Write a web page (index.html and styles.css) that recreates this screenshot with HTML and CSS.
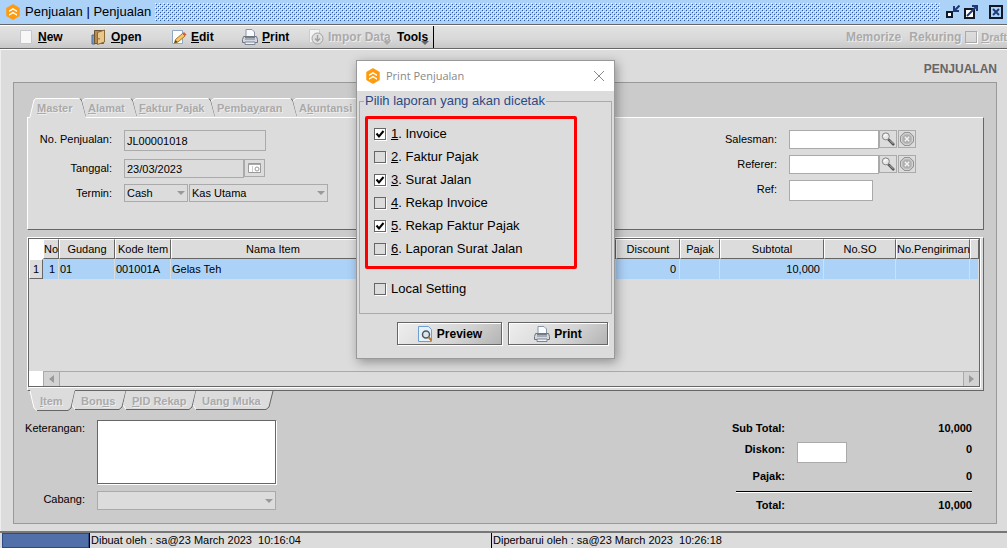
FILE: index.html
```html
<!doctype html>
<html lang="id">
<head>
	<meta charset="UTF-8">
	<title>Penjualan | Penjualan</title>
	<link rel="stylesheet" href="styles.css">
</head>
<body>
	<!-- shared icons -->
	<svg class="defs" aria-hidden="true">
		<symbol id="logo" viewBox="0 0 16 16">
			<path d="M8 1l6 3.500v7L8 15l-6-3.500v-7z" fill="#ff9b0f" stroke="#ff9b0f" stroke-width="1.500" stroke-linejoin="round"/>
			<path d="M4 8V6.500l4-2.500 4 2.500V8L8 5.800zM4 11.800v-1.500l4-2.500 4 2.500v1.500L8 9.600z" fill="#fff"/>
		</symbol>
		<symbol id="printer" viewBox="0 0 16 16">
			<path d="M4 7V.5h6L12.500 3v4" fill="#f8fbff" stroke="#8a96a6"/>
			<path d="M1.500 7.500h13l1 3v3H.5v-3z" fill="#d5d9df" stroke="#6e7681"/>
			<path d="M3 10h10M3 8.500h10" stroke="#777f8a"/>
			<path d="M3 13h10v2.500H3z" fill="#eef3fa" stroke="#7c8795"/>
		</symbol>
		<symbol id="lens" viewBox="0 0 16 16">
			<path d="M9 9l5 5" stroke="#555" stroke-width="3" stroke-linecap="round"/>
			<path d="M10 9.500l4 4" stroke="#c8c8c8"/>
			<circle cx="5.500" cy="5" r="4" fill="#e8e8e8" stroke="#777"/>
			<path d="M3.500 5a3 3 0 0 1 3-2" fill="none" stroke="#fff" stroke-width="1.500"/>
		</symbol>
		<symbol id="clear" viewBox="0 0 16 16">
			<path d="M5 .5h6L15.500 5v6L11 15.500H5L.5 11V5z" fill="#b0b0b0" stroke="#888"/>
			<path d="M5.400 2h5.200L14 5.400v5.200L10.600 14H5.400L2 10.600V5.400z" fill="none" stroke="#e4e4e4"/>
			<path d="M5.500 5.500l5 5m0-5l-5 5" stroke="#f4f4f4" stroke-width="1.500"/>
		</symbol>
	</svg>

	<header class="titlebar">
		<svg class="icon"><use href="#logo"/></svg>
		<h1>Penjualan | Penjualan</h1>
		<div class="grip"></div>
		<button class="winbtn" aria-label="Minimize">
			<svg viewBox="0 0 14 14"><path d="M1 7h5v5H1z" fill="#fff" stroke="#101828" stroke-width="2"/><path d="M8 1v5h5" fill="none" stroke="#203a78" stroke-width="2"/><path d="M8 6l5.500-5.500" stroke="#203a78" stroke-width="2"/></svg>
		</button>
		<button class="winbtn" aria-label="Maximize">
			<svg viewBox="0 0 14 14"><path d="M1 4h9v9H1z" fill="#fff" stroke="#101828" stroke-width="2"/><path d="M3 11L12 2" stroke="#203a78" stroke-width="2"/><path d="M8 1h5v5" fill="none" stroke="#203a78" stroke-width="2"/></svg>
		</button>
		<button class="winbtn close" aria-label="Close">
			<svg viewBox="0 0 14 14"><path d="M1 1h12v12H1z" fill="#add2f8" stroke="#101828" stroke-width="2"/><path d="M4 4l6 6m0-6l-6 6" stroke="#203a78" stroke-width="2"/></svg>
		</button>
	</header>

	<nav class="toolbar">
		<button class="tool new">
			<svg class="icon" viewBox="0 0 16 16"><path d="M2.500 1.500h11v13h-11z" fill="#f7f7f7" stroke="#c4c8cc"/></svg>
			<span><u>N</u>ew</span>
		</button>
		<button class="tool open">
			<svg class="icon" viewBox="0 0 16 16"><path d="M1 6h3v9H1z" fill="#7d9cc0" stroke="#4c6c94"/><path d="M3.500 1.500h9v13h-9z" fill="#b98a50" stroke="#6e5432"/><path d="M6.500 3.500L13.500 1v12l-7 2.500z" fill="#e9c68a" stroke="#8b6a38"/><path d="M8 9v1.500" stroke="#6c4a1c"/></svg>
			<span><u>O</u>pen</span>
		</button>
		<button class="tool edit">
			<svg class="icon" viewBox="0 0 16 16"><path d="M1.500 1.500h10v13h-10z" fill="#fdfdfd" stroke="#8fa8c8"/><path d="M4.500 10.500l7-6 2.500 2.500-7 6-3.500 1z" fill="#f5c768" stroke="#a87422"/><path d="M11.500 4.500l1.500-1.500 2.500 2.500-1.500 1.500z" fill="#dc5a4a"/><path d="M3.500 14l1-3 2 2z" fill="#444"/></svg>
			<span><u>E</u>dit</span>
		</button>
		<button class="tool print">
			<svg class="icon"><use href="#printer"/></svg>
			<span><u>P</u>rint</span>
		</button>
		<button class="tool impor drop" disabled>
			<svg class="icon" viewBox="0 0 16 16"><path d="M1.500.5h10v13h-10z" fill="#f4f4f4" stroke="#ccc"/><circle cx="9.500" cy="9.500" r="5.500" fill="#e0e0e0" stroke="#a0a0a0"/><path d="M9.500 6v6M7 9.500l2.500 2.500 2.500-2.500" fill="none" stroke="#a0a0a0" stroke-width="1.500"/></svg>
			<span>Impor Data</span>
		</button>
		<button class="tool tools drop"><span>Tools</span></button>
		<div class="right">
			<button class="tool" disabled>Memorize</button>
			<button class="tool" disabled>Rekuring</button>
			<input class="check" type="checkbox" id="draft" disabled>
			<label for="draft"><u>D</u>raft</label>
		</div>
	</nav>

	<main>
		<h2>PENJUALAN</h2>
		<div class="panel">
			<div class="tabs top">
				<button disabled class="t-master"><svg viewBox="0 0 56 19"><path class="face" d="M0 20L4 2L6 .5H50L52 3L56 20z"/><path class="lit" d="M0 19L4 2L6 .5H50"/><path class="dim" d="M50 .5L52 3L56 18"/></svg><span><u>M</u>aster</span></button>
				<button disabled class="t-alamat"><svg viewBox="0 0 51 19"><path class="face" d="M0 19L-4 3L-1 .5H45L47 3L51 19z"/><path class="lit" d="M-4 3L-1 .5H45"/><path class="dim" d="M45 .5L47 3L51 18"/></svg><span><u>A</u>lamat</span></button>
				<button disabled class="t-faktur"><svg viewBox="0 0 78 19"><path class="face" d="M0 19L-4 3L-1 .5H72L74 3L78 19z"/><path class="lit" d="M-4 3L-1 .5H72"/><path class="dim" d="M72 .5L74 3L78 18"/></svg><span><u>F</u>aktur Pajak</span></button>
				<button disabled class="t-bayar"><svg viewBox="0 0 82 19"><path class="face" d="M0 19L-4 3L-1 .5H76L78 3L82 19z"/><path class="lit" d="M-4 3L-1 .5H76"/><path class="dim" d="M76 .5L78 3L82 18"/></svg><span>Pemba<u>y</u>aran</span></button>
				<button disabled class="t-akun"><svg viewBox="0 0 66 19"><path class="face" d="M0 19L-4 3L-1 .5H60L62 3L66 19z"/><path class="lit" d="M-4 3L-1 .5H60"/><path class="dim" d="M60 .5L62 3L66 18"/></svg><span>A<u>k</u>untansi</span></button>
			</div>

			<section class="master">
				<div class="form main">
					<label for="nomor">No. Penjualan:</label>
					<div class="field"><input class="nomor" id="nomor" value="JL00001018" readonly></div>
					<label for="tanggal">Tanggal:</label>
					<div class="field">
						<input class="tanggal" id="tanggal" value="23/03/2023" readonly>
						<button class="cal" aria-label="Kalender"><svg viewBox="0 0 13 10"><path d="M.5.500h12v9H.5z" fill="#fff" stroke="#999"/><path d="M1 1.500h11" stroke="#aaa"/><path d="M4.500 3v6" stroke="#ccc"/><circle cx="9" cy="6" r="2" fill="none" stroke="#999"/></svg></button>
					</div>
					<label for="termin">Termin:</label>
					<div class="field">
						<select class="termin" id="termin"><option>Cash</option></select>
						<select class="kas" aria-label="Kas"><option>Kas Utama</option></select>
					</div>
				</div>
				<div class="form sales">
					<label for="salesman">Salesman:</label>
					<div class="field">
						<input class="look" id="salesman">
						<button class="sq" aria-label="Cari salesman"><svg><use href="#lens"/></svg></button>
						<button class="sq gap" aria-label="Hapus salesman"><svg><use href="#clear"/></svg></button>
					</div>
					<label for="referer">Referer:</label>
					<div class="field">
						<input class="look" id="referer">
						<button class="sq" aria-label="Cari referer"><svg><use href="#lens"/></svg></button>
						<button class="sq gap" aria-label="Hapus referer"><svg><use href="#clear"/></svg></button>
					</div>
					<label for="ref">Ref:</label>
					<div class="field"><input class="ref" id="ref"></div>
				</div>
			</section>

			<section class="items">
				<div class="grid">
					<table>
						<colgroup>
							<col class="c-head"><col class="c-no"><col class="c-std"><col class="c-std"><col class="c-nama"><col>
							<col class="c-disc"><col class="c-pajak"><col class="c-sub"><col class="c-so"><col class="c-kirim"><col class="c-end">
						</colgroup>
						<thead>
							<tr>
								<td></td>
								<th>No</th>
								<th>Gudang</th>
								<th>Kode Item</th>
								<th>Nama Item</th>
								<th></th>
								<th>Discount</th>
								<th>Pajak</th>
								<th>Subtotal</th>
								<th>No.SO</th>
								<th>No.Pengiriman</th>
								<th></th>
							</tr>
						</thead>
						<tbody>
							<tr>
								<th>1</th>
								<td class="num">1</td>
								<td>01</td>
								<td>001001A</td>
								<td>Gelas Teh</td>
								<td></td>
								<td class="num">0</td>
								<td></td>
								<td class="num">10,000</td>
								<td></td>
								<td></td>
								<td></td>
							</tr>
						</tbody>
					</table>
					<div class="scroll">
						<button aria-label="Geser kiri"><svg viewBox="0 0 5 8"><path d="M5 0v8L0 4z" fill="#999"/></svg></button>
						<div class="track"></div>
						<button aria-label="Geser kanan"><svg viewBox="0 0 5 8"><path d="M0 0v8l5-4z" fill="#999"/></svg></button>
					</div>
				</div>
			</section>

			<div class="tabs bottom">
				<button disabled class="t-item"><svg viewBox="0 0 45 20"><path class="face" d="M0-1L4 17L7 19.500H38L41 17L45-1z"/><path class="lit" d="M0 0L4 17L7 19.500"/><path class="dim" d="M7 19.500H38L41 17L45 0"/></svg><span><u>I</u>tem</span></button>
				<button disabled class="t-bonus"><svg viewBox="0 0 51 20"><path class="face" d="M0 0L-3 14L0 18.500H44L47 16L51 0z"/><path class="lit" d="M-3 14L0 18.500"/><path class="dim" d="M0 18.500H44L47 16L51 0"/></svg><span>Bon<u>u</u>s</span></button>
				<button disabled class="t-pid"><svg viewBox="0 0 70 20"><path class="face" d="M0 0L-3 14L0 18.500H63L66 16L70 0z"/><path class="lit" d="M-3 14L0 18.500"/><path class="dim" d="M0 18.500H63L66 16L70 0"/></svg><span><u>P</u>ID Rekap</span></button>
				<button disabled class="t-uang"><svg viewBox="0 0 77 20"><path class="face" d="M0 0L-3 14L0 18.500H70L73 16L77 0z"/><path class="lit" d="M-3 14L0 18.500"/><path class="dim" d="M0 18.500H70L73 16L77 0"/></svg><span>Uang Muka</span></button>
			</div>

			<section class="foot">
				<div class="form notes">
					<label for="ket">Keterangan:</label>
					<textarea id="ket"></textarea>
					<label for="cabang">Cabang:</label>
					<select id="cabang"><option></option></select>
				</div>
				<div class="totals">
					<span>Sub Total:</span><b>10,000</b>
					<label for="diskon">Diskon:</label><input id="diskon"><b>0</b>
					<span>Pajak:</span><b>0</b>
					<hr>
					<span>Total:</span><b>10,000</b>
				</div>
			</section>
		</div>
	</main>

	<footer class="status">
		<div class="progress"></div>
		<div class="made">Dibuat oleh : sa@23 March 2023&nbsp; 10:16:04</div>
		<div class="changed">Diperbarui oleh : sa@23 March 2023&nbsp; 10:26:18</div>
	</footer>

	<!-- print dialog -->
	<div class="dialog" role="dialog" aria-labelledby="dlg-title">
		<div class="dlg-title">
			<svg class="icon"><use href="#logo"/></svg>
			<h3 id="dlg-title">Print Penjualan</h3>
			<button aria-label="Tutup"><svg viewBox="0 0 12 12"><path d="M1 1l10 10M11 1L1 11" stroke="#888"/></svg></button>
		</div>
		<fieldset>
			<legend>Pilih laporan yang akan dicetak</legend>
			<div class="marked">
				<label><input class="check" type="checkbox" checked><span><u>1</u>. Invoice</span></label>
				<label><input class="check" type="checkbox"><span><u>2</u>. Faktur Pajak</span></label>
				<label><input class="check" type="checkbox" checked><span><u>3</u>. Surat Jalan</span></label>
				<label><input class="check" type="checkbox"><span><u>4</u>. Rekap Invoice</span></label>
				<label><input class="check" type="checkbox" checked><span><u>5</u>. Rekap Faktur Pajak</span></label>
				<label><input class="check" type="checkbox"><span><u>6</u>. Laporan Surat Jalan</span></label>
			</div>
			<label class="local"><input class="check" type="checkbox"><span>Local Setting</span></label>
		</fieldset>
		<div class="actions">
			<button class="preview">
				<svg class="icon" viewBox="0 0 16 16"><path d="M1.500.5h10l3 3v12h-13z" fill="#e4f1fc" stroke="#6f9fd0"/><circle cx="9" cy="8.500" r="3.500" fill="#d8e6f4" stroke="#555" stroke-width="1.500"/><path d="M11.500 11l3 3.500" stroke="#b87a30" stroke-width="2"/></svg>
				Preview
			</button>
			<button>
				<svg class="icon"><use href="#printer"/></svg>
				Print
			</button>
		</div>
	</div>
</body>
</html>
```
FILE: styles.css
```css
* {
	box-sizing: border-box;
}
html, body {
	margin: 0;
	height: 100%;
}
body {
	display: flex;
	flex-direction: column;
	position: relative;
	background: #dcdcdc;
	color: #000;
	font: 11px/14px "Liberation Sans", Arial, sans-serif;
	overflow: hidden;
}
h1, h2, h3 {
	margin: 0;
	font-weight: normal;
}
button, input, select, textarea {
	margin: 0;
	padding: 0;
	border: 0;
	border-radius: 0;
	background: none;
	color: #000;
	font: inherit;
}
u {
	text-underline-offset: 1px;
}
.defs {
	position: absolute;
	width: 0;
	height: 0;
}
.icon {
	width: 16px;
	height: 16px;
	flex: none;
}

/* title bar */
.titlebar {
	display: flex;
	align-items: center;
	height: 25px;
	padding: 0 3px 0 5px;
	background: #add2f8;
	border-bottom: 1px solid #666;
	flex: none;
}
.titlebar h1 {
	margin: 0 4px;
	font-size: 13px;
}
.grip {
	flex: 1;
	height: 18px;
	margin-right: 6px;
	background: url("data:image/svg+xml,%3Csvg xmlns='http://www.w3.org/2000/svg' width='4' height='4' shape-rendering='crispEdges'%3E%3Cpath d='M0 0h1v1H0zM2 2h1v1H2z' fill='%23fff'/%3E%3Cpath d='M1 1h1v1H1zM3 3h1v1H3z' fill='%2332589c'/%3E%3C/svg%3E");
}
.winbtn {
	width: 14px;
	height: 14px;
	margin-right: 4px;
}
.winbtn svg {
	display: block;
}
.winbtn.close {
	margin: 0 1px 0 7px;
}

/* toolbar */
.toolbar {
	display: flex;
	align-items: center;
	height: 24px;
	padding-left: 18px;
	border-top: 1px solid #fff;
	border-bottom: 1px solid #666;
	background: linear-gradient(#e2e2e2, #d8d8d8 60%, #c8c8c8);
	font-size: 12px;
	font-weight: bold;
	flex: none;
}
.tool {
	display: flex;
	align-items: center;
	gap: 4px;
	position: relative;
	white-space: nowrap;
}
.tool:disabled, .toolbar label {
	color: #aaa;
	text-shadow: 1px 1px #eee;
}
.new { width: 73px; }
.open { width: 80px; }
.edit { width: 71px; }
.print { width: 66px; }
.impor { width: 89px; }
.tools {
	width: 37px;
	height: 22px;
	border-right: 1px solid #000;
}
.drop::after {
	content: "";
	position: absolute;
	right: 4px;
	bottom: 3px;
	border: 4px solid transparent;
	border-top-color: #666;
	border-bottom: 0;
}
.impor::after {
	right: 6px;
	bottom: 0;
	border-top-color: #aaa;
}
.toolbar .right {
	display: flex;
	align-items: center;
	margin-left: auto;
}
.toolbar label {
	font-size: 11px;
}
.right .tool {
	margin-right: 8px;
}
.right .tool + .check {
	margin: 0 4px 0 -4px;
}
.check {
	appearance: none;
	width: 12px;
	height: 12px;
	border: 1px solid #666;
	box-shadow: 1px 1px #fff;
	flex: none;
}
.check:disabled {
	border-color: #aaa;
}
.check:checked {
	background: #fff url("data:image/svg+xml,%3Csvg xmlns='http://www.w3.org/2000/svg' viewBox='0 0 10 10'%3E%3Cpath d='M1.500 4.500l2.500 3L8.500 2' fill='none' stroke='%23000' stroke-width='2'/%3E%3C/svg%3E");
}

/* content */
main {
	flex: 1;
	display: flex;
	flex-direction: column;
	padding: 12px 10px 7px 12px;
	border-top: 1px solid #fff;
	border-left: 1px solid #eee;
	min-height: 0;
}
main h2 {
	height: 20px;
	color: #666;
	font-size: 12px;
	font-weight: bold;
	text-align: right;
}
.panel {
	flex: 1;
	padding: 15px 12px 0 13px;
	background: #cbcbcb;
	border: 1px solid #999;
}

/* tabs */
.tabs {
	display: flex;
	padding-left: 3px;
}
.tabs button {
	position: relative;
	height: 20px;
	padding-left: 6px;
	color: #aaa;
	font-weight: bold;
	text-align: left;
	text-shadow: 1px 1px #eee;
	white-space: nowrap;
}
.tabs.top button {
	height: 19px;
	padding-left: 2px;
}
.tabs span {
	position: relative;
}
.tabs svg {
	position: absolute;
	inset: 0;
	width: 100%;
	height: 100%;
	overflow: visible;
}
.face {
	fill: #dcdcdc;
}
.lit {
	fill: none;
	stroke: #fff;
}
.dim {
	fill: none;
	stroke: #666;
}
.t-master { width: 56px; }
.t-alamat { width: 51px; }
.t-faktur { width: 78px; }
.t-bayar { width: 82px; }
.t-akun { width: 66px; }
.t-item { width: 45px; }
.t-bonus { width: 51px; }
.t-pid { width: 70px; }
.t-uang { width: 77px; }
.tabs.top .t-master {
	padding-left: 7px;
}
.tabs.bottom .t-item {
	padding-left: 10px;
}

.master {
	display: flex;
	justify-content: space-between;
	height: 113px;
	padding: 12px 67px 0 5px;
	background: #dcdcdc;
	border: 1px solid;
	border-color: #fff #666 #666 #fff;
}
.form {
	display: grid;
	grid-template-columns: 79px auto;
	column-gap: 12px;
	align-content: start;
}
.form label {
	text-align: right;
	padding-top: 2px;
}
.field {
	display: flex;
	align-items: flex-start;
}
.master input, select, .totals input {
	height: 19px;
	border: 1px solid #aaa;
	background: #fff;
}
.master input[readonly], select {
	padding: 0 2px;
	background: #dcdcdc;
}
.form.main {
	grid-template-rows: 29px 25px 19px;
}
.master .nomor {
	width: 142px;
	height: 21px;
	padding: 0 4px;
}
.tanggal {
	width: 120px;
}
.cal {
	display: grid;
	place-items: center;
	width: 21px;
	height: 18px;
	border: 1px solid #aaa;
}
.cal svg {
	width: 13px;
	height: 10px;
}
select {
	appearance: none;
	background: #dcdcdc url("data:image/svg+xml,%3Csvg xmlns='http://www.w3.org/2000/svg' viewBox='0 0 8 4'%3E%3Cpath d='M0 0h8L4 4z' fill='%23999'/%3E%3C/svg%3E") no-repeat right 2px center / 8px 4px;
}
.field select {
	height: 18px;
}
.termin {
	width: 64px;
	margin-right: 1px;
}
.kas {
	width: 139px;
}
.sales {
	grid-auto-rows: 25px;
}
.sales .look {
	width: 90px;
}
.master .ref {
	width: 84px;
	height: 21px;
}
.sq {
	display: grid;
	place-items: center;
	width: 18px;
	height: 18px;
	border: 1px solid #aaa;
}
.sq.gap {
	margin-left: 1px;
}
.sq svg {
	width: 14px;
	height: 14px;
}

/* item grid */
.items {
	height: 154px;
	margin-top: 7px;
	padding: 0 3px 3px 0;
	background: #dcdcdc;
	border: 1px solid;
	border-color: #fff #666 #666 #fff;
}
.grid {
	display: flex;
	flex-direction: column;
	height: 100%;
	border: 1px solid #666;
	box-shadow: 1px 1px #fff;
}
table {
	width: 100%;
	table-layout: fixed;
	border-collapse: separate;
	border-spacing: 0;
}
.c-head { width: 14px; }
.c-no { width: 16px; }
.c-std { width: 56px; }
.c-nama { width: 204px; }
.c-disc { width: 64px; }
.c-pajak { width: 40px; }
.c-sub { width: 104px; }
.c-so { width: 72px; }
.c-kirim { width: 74px; }
.c-end { width: 9px; }
th, td {
	height: 20px;
	padding: 0;
	font-weight: normal;
	white-space: nowrap;
}
th {
	border: 1px solid;
	border-color: #fff #666 #666 #fff;
	text-align: center;
}
thead td {
	background: #fff;
}
tbody td {
	padding: 0 1px;
	background: #add2f8;
	border-right: 1px solid #dcdcdc;
}
.num {
	padding-right: 3px;
	text-align: right;
}
.scroll {
	display: flex;
	height: 15px;
	margin-top: auto;
	border-left: 14px solid #fff;
}
.scroll button {
	display: grid;
	place-items: center;
	width: 16px;
	background: #d2d2d2;
	border: 1px solid #aaa;
	border-width: 1px 0 0 1px;
}
.scroll svg {
	width: 5px;
	height: 8px;
}
.track {
	flex: 1;
	border: 1px solid #aaa;
	border-width: 1px 0 0 1px;
}

/* bottom part */
.foot {
	display: flex;
	justify-content: space-between;
	padding: 9px 12px 0 0;
}
.notes {
	grid-template-columns: 58px 179px;
	grid-template-rows: 71px 19px;
}
.notes label {
	padding-top: 1px;
	justify-self: end;
}
.notes textarea {
	height: 64px;
	background: #fff;
	border: 1px solid #666;
	box-shadow: 1px 1px #fff;
	resize: none;
}
.totals {
	display: grid;
	grid-template-columns: 49px 50px 1fr;
	grid-template-rows: 21px 27px 22px auto 20px;
	column-gap: 12px;
	width: 236px;
	padding-top: 1px;
	font-weight: bold;
}
.totals span, .totals label, .totals b {
	text-align: right;
	white-space: nowrap;
}
.totals span, .totals label {
	grid-column: 1;
	justify-self: end;
}
.totals b {
	grid-column: 3;
}
.totals input {
	height: 21px;
}
.totals hr {
	grid-column: 1 / 4;
	width: 100%;
	height: 2px;
	margin: 0 0 5px;
	border: 0;
	border-top: 1px solid #000;
	background: #fff;
}

/* status bar */
.status {
	display: flex;
	height: 17px;
	padding-left: 2px;
	border-top: 2px solid #777;
	flex: none;
}
.status div {
	padding-left: 1px;
	border-left: 1px solid #000;
}
.status .progress {
	width: 87px;
	background: #5170aa;
	border: 1px solid #2c4a86;
}
.made {
	width: 402px;
}

/* dialog */
.dialog {
	position: absolute;
	left: 356px;
	top: 60px;
	width: 259px;
	background: #dcdcdc;
	border: 1px solid #999;
	box-shadow: 2px 3px 10px rgba(0, 0, 0, .35);
	font-size: 13px;
	line-height: 16px;
}
.dlg-title {
	display: flex;
	align-items: center;
	height: 30px;
	padding: 0 9px 0 8px;
	background: #fff;
}
.dlg-title h3 {
	flex: 1;
	margin-left: 5px;
	color: #888;
	font: 11px/16px "Open Sans", "Noto Sans", sans-serif;
}
.dlg-title button, .dlg-title button svg {
	display: block;
	width: 12px;
	height: 12px;
}
fieldset {
	margin: 2px 2px 0;
	padding: 0 5px 13px;
	border: 1px solid #aaa;
}
legend {
	padding: 0 1px;
	margin-left: -1px;
	color: #2c4a86;
}
.marked {
	width: 212px;
	margin-top: 7px;
	padding: 3px 0 6px;
	border: 3px solid #f00;
	border-radius: 2px;
}
fieldset label {
	display: flex;
	align-items: center;
	height: 23px;
	padding-left: 6px;
	gap: 5px;
}
fieldset .local {
	margin-top: 8px;
	padding-left: 9px;
}
.actions {
	display: flex;
	justify-content: flex-end;
	gap: 6px;
	padding: 8px 6px 13px;
}
.actions button {
	display: flex;
	align-items: center;
	justify-content: center;
	gap: 4px;
	width: 100px;
	height: 23px;
	background: linear-gradient(135deg, #eee, #d4d4d4 60%, #b4b4b4);
	border: 1px solid #666;
	box-shadow: 1px 1px #fff, inset 1px 1px #fff;
	font-size: 12px;
	font-weight: bold;
}
.actions .preview {
	width: 105px;
}
```
